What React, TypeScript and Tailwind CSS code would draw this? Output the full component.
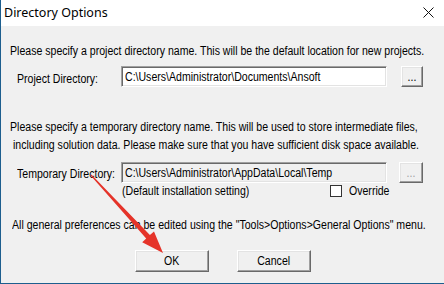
import React from "react";

const sans = { fontFamily: '"Liberation Sans", Arial, sans-serif' };

function T({ children, className = "" }: { children: React.ReactNode; className?: string }) {
  return <span className={`inline-block whitespace-nowrap origin-left scale-x-[0.88] ${className}`}>{children}</span>;
}

function Btn({ children, w, disabled }: { children: React.ReactNode; w: string; disabled?: boolean }) {
  return (
    <div
      className={`${w} h-full flex items-center justify-center bg-[#f0f0f0] border border-t-white border-l-white border-b-[#696969] border-r-[#696969] shadow-[inset_-1px_-1px_0_#a0a0a0,inset_1px_1px_0_#e3e3e3] text-[12px] ${disabled ? "text-[#a0a0a0]" : "text-black"}`}
    >
      <span className="inline-block whitespace-nowrap scale-x-[0.88]">{children}</span>
    </div>
  );
}

function Field({ value, disabled }: { value: string; disabled?: boolean }) {
  return (
    <div
      className={`w-[266px] h-full shrink-0 flex items-center pl-[3px] border border-t-[#a0a0a0] border-l-[#a0a0a0] border-b-white border-r-white shadow-[inset_1px_1px_0_#696969,inset_-1px_-1px_0_#e3e3e3] text-[12px] text-black ${disabled ? "bg-[#f0f0f0]" : "bg-white"}`}
    >
      <T>{value}</T>
    </div>
  );
}

export default function App() {
  return (
    <div className="relative w-[444px] h-[284px] overflow-hidden bg-[#f0f0f0] border-l border-b border-[#1d5e8e] flex flex-col" style={sans}>
      <div className="h-[26px] bg-white flex items-center justify-between pl-[3px] pr-[10px] shrink-0">
        <span className="text-[12.5px] text-black" style={{ fontFamily: '"Noto Sans", "Open Sans", sans-serif' }}>
          Directory Options
        </span>
        <svg width="11" height="11" viewBox="0 0 11 11" className="mt-[-1px]">
          <path d="M0.5 0.5 L10.5 10.5 M10.5 0.5 L0.5 10.5" stroke="#111" strokeWidth="1" fill="none" />
        </svg>
      </div>

      <div className="flex flex-col text-[12px] text-black leading-[14px]">
        <div className="mt-[18px] pl-[9px] h-[14px]">
          <T>Please specify a project directory name. This will be the default location for new projects.</T>
        </div>
        <div className="mt-[8px] h-[21px] flex items-center">
          <div className="pl-[16px] w-[120px] shrink-0 pt-[4px]">
            <T>Project Directory:</T>
          </div>
          <Field value="C:\Users\Administrator\Documents\Ansoft" />
          <div className="ml-[14px] h-full">
            <Btn w="w-[22px]">...</Btn>
          </div>
        </div>

        <div className="mt-[31px] pl-[9px] h-[18px] leading-[18px]">
          <T>Please specify a temporary directory name. This will be used to store intermediate files,</T>
        </div>
        <div className="pl-[12px] h-[18px] leading-[18px]">
          <T>including solution data. Please make sure that you have sufficient disk space available.</T>
        </div>
        <div className="mt-[8px] h-[21px] flex items-center">
          <div className="pl-[16px] w-[120px] shrink-0 pt-[2px]">
            <T>Temporary Directory:</T>
          </div>
          <Field value="C:\Users\Administrator\AppData\Local\Temp" disabled />
          <div className="ml-[12px] h-full">
            <Btn w="w-[24px]" disabled>...</Btn>
          </div>
        </div>
        <div className="h-[14px] flex items-center mt-[1px]">
          <div className="pl-[121px] w-[329px] shrink-0">
            <T>(Default installation setting)</T>
          </div>
          <span className="w-[12px] h-[12px] bg-white border border-[#333] shrink-0" />
          <div className="ml-[7px]">
            <T>Override</T>
          </div>
        </div>

        <div className="mt-[20px] pl-[11px] h-[14px]">
          <T>All general preferences can be edited using the "Tools&gt;Options&gt;General Options" menu.</T>
        </div>

        <div className="mt-[18px] h-[22px] flex pl-[134px] gap-[28px]">
          <Btn w="w-[74px]">OK</Btn>
          <Btn w="w-[74px]">Cancel</Btn>
        </div>
      </div>

      <svg className="absolute left-0 top-0 pointer-events-none" width="444" height="284">
        <polygon
          points="89.6,175.4 90.4,174.6 148.9,235.1 153,231.4 162,253 141.2,242.2 145.2,238.5"
          fill="#e53329"
        />
      </svg>
    </div>
  );
}
